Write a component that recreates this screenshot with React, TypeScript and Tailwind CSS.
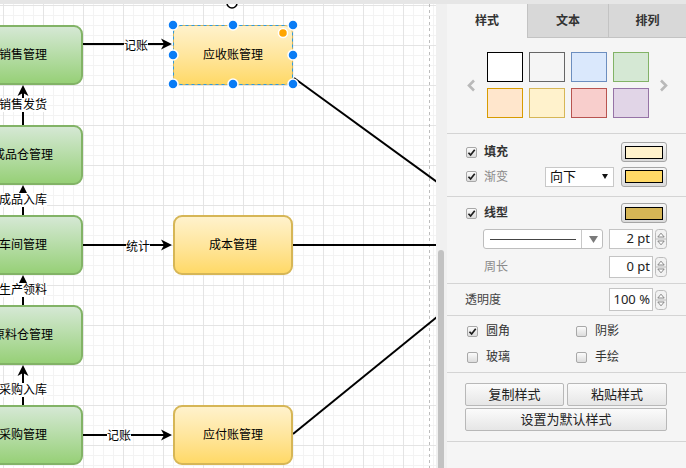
import React from 'react';

type Node = { label: string; pos: string };

const greenNodes: Node[] = [
  { label: '销售管理', pos: 'top-[21px]' },
  { label: '成品仓管理', pos: 'top-[121px]' },
  { label: '车间管理', pos: 'top-[211px]' },
  { label: '原料仓管理', pos: 'top-[301px]' },
  { label: '采购管理', pos: 'top-[401px]' },
];

const edgeLabels = [
  { text: '销售发货', pos: 'left-[23px] top-[101px]' },
  { text: '成品入库', pos: 'left-[23px] top-[196px]' },
  { text: '生产领料', pos: 'left-[23px] top-[286px]' },
  { text: '采购入库', pos: 'left-[23px] top-[386px]' },
  { text: '记账', pos: 'left-[136px] top-[42px]' },
  { text: '统计', pos: 'left-[138px] top-[243px]' },
  { text: '记账', pos: 'left-[119px] top-[432px]' },
];

const swatches = [
  'bg-white border-black',
  'bg-[#f5f5f5] border-[#666666]',
  'bg-[#dae8fc] border-[#6c8ebf]',
  'bg-[#d5e8d4] border-[#82b366]',
  'bg-[#ffe6cc] border-[#d79b00]',
  'bg-[#fff2cc] border-[#d6b656]',
  'bg-[#f8cecc] border-[#b85450]',
  'bg-[#e1d5e7] border-[#9673a6]',
];

function Grid() {
  const minorX: number[] = [];
  const majorX: number[] = [];
  const minorY: number[] = [];
  const majorY: number[] = [];
  for (let x = 3; x < 436; x += 10) ((x - 3) % 40 === 0 ? majorX : minorX).push(x);
  for (let y = 5; y < 468; y += 10) ((y - 5) % 40 === 0 ? majorY : minorY).push(y);
  return (
    <svg className="absolute inset-0" width={436} height={464} viewBox="0 4 436 464" shapeRendering="crispEdges">
      {minorX.map((x) => (
        <line key={'vx' + x} x1={x + 0.5} x2={x + 0.5} y1={4} y2={468} stroke="#f3f3f3" />
      ))}
      {minorY.map((y) => (
        <line key={'hy' + y} x1={0} x2={436} y1={y + 0.5} y2={y + 0.5} stroke="#f3f3f3" />
      ))}
      {majorX.map((x) => (
        <line key={'VX' + x} x1={x + 0.5} x2={x + 0.5} y1={4} y2={468} stroke="#e4e4e4" />
      ))}
      {majorY.map((y) => (
        <line key={'HY' + y} x1={0} x2={436} y1={y + 0.5} y2={y + 0.5} stroke="#e4e4e4" />
      ))}
      <line x1={429.5} x2={429.5} y1={4} y2={468} stroke="#bdbdbd" strokeDasharray="3 3" />
    </svg>
  );
}

const arrowRight = (tx: number, ty: number) =>
  `${tx},${ty} ${tx - 11},${ty - 5.5} ${tx - 8},${ty} ${tx - 11},${ty + 5.5}`;
const arrowUp = (tx: number, ty: number) =>
  `${tx},${ty} ${tx + 5.5},${ty + 11} ${tx},${ty + 8} ${tx - 5.5},${ty + 11}`;

function Edges() {
  return (
    <svg className="absolute inset-0" width={436} height={464} viewBox="0 4 436 464">
      <g stroke="#000" strokeWidth={2} fill="none">
        <line x1={23} y1={125} x2={23} y2={93} />
        <line x1={23} y1={215} x2={23} y2={193} />
        <line x1={23} y1={305} x2={23} y2={283} />
        <line x1={23} y1={405} x2={23} y2={373} />
        <line x1={83} y1={44} x2={164} y2={44} />
        <line x1={83} y1={245} x2={164} y2={245} />
        <line x1={83} y1={435} x2={164} y2={435} />
        <line x1={294} y1={78} x2={437} y2={182} />
        <line x1={293} y1={245} x2={437} y2={245} />
        <line x1={293} y1={434} x2={437} y2={317} />
      </g>
      <g fill="#000">
        <polygon points={arrowUp(23, 85)} />
        <polygon points={arrowUp(23, 185)} />
        <polygon points={arrowUp(23, 275)} />
        <polygon points={arrowUp(23, 365)} />
        <polygon points={arrowRight(172, 44)} />
        <polygon points={arrowRight(172, 245)} />
        <polygon points={arrowRight(172, 435)} />
      </g>
    </svg>
  );
}

function Handles() {
  const pts = [
    [173, 25], [233, 25], [293, 25],
    [173, 55], [293, 55],
    [173, 84], [233, 84], [293, 84],
  ];
  return (
    <svg className="pointer-events-none absolute inset-0" width={436} height={464} viewBox="0 4 436 464">
      <rect x={173.5} y={25.5} width={119} height={59} fill="none" stroke="#2f9be0" strokeDasharray="3 3" />
      <circle cx={232} cy={3} r={5} fill="#fff" stroke="#000" strokeWidth={1.5} />
      {pts.map(([x, y]) => (
        <circle key={`${x}-${y}`} cx={x} cy={y} r={5} fill="#0a7cf5" stroke="#fff" strokeWidth={1.5} />
      ))}
      <circle cx={283} cy={33} r={4.5} fill="#ffa500" stroke="#fff" strokeWidth={1.5} />
    </svg>
  );
}

function Canvas() {
  return (
    <div className="relative h-[464px] w-[436px] overflow-hidden bg-white text-[12px] text-black">
      <Grid />
      <Edges />
      {greenNodes.map((n) => (
        <div
          key={n.label}
          className={`absolute left-[-37px] ${n.pos} flex h-[60px] w-[120px] items-center justify-center rounded-[9px] border-2 border-[#82b366] bg-linear-to-b from-[#d5e8d4] to-[#97d077] whitespace-nowrap`}
        >
          {n.label}
        </div>
      ))}
      <div className="absolute left-[173px] top-[21px] flex h-[60px] w-[120px] items-center justify-center rounded-[8px] border border-[#d6b656] bg-linear-to-b from-[#fff2cc] to-[#ffd966]">
        应收账管理
      </div>
      <div className="absolute left-[173px] top-[211px] flex h-[60px] w-[120px] items-center justify-center rounded-[9px] border-2 border-[#d6b656] bg-linear-to-b from-[#fff2cc] to-[#ffd966]">
        成本管理
      </div>
      <div className="absolute left-[173px] top-[401px] flex h-[60px] w-[120px] items-center justify-center rounded-[9px] border-2 border-[#d6b656] bg-linear-to-b from-[#fff2cc] to-[#ffd966]">
        应付账管理
      </div>
      {edgeLabels.map((l) => (
        <span
          key={l.pos}
          className={`absolute ${l.pos} -translate-x-1/2 -translate-y-1/2 bg-white leading-[14px] whitespace-nowrap`}
        >
          {l.text}
        </span>
      ))}
      <Handles />
    </div>
  );
}

function Check({ checked }: { checked?: boolean }) {
  return (
    <span className="flex h-[11px] w-[11px] shrink-0 items-center justify-center rounded-[2px] border border-[#a8a8a8] bg-linear-to-b from-[#fbfbfb] to-[#dcdcdc]">
      {checked && (
        <svg viewBox="0 0 10 10" className="h-[9px] w-[9px]">
          <path d="M1.6 5.3 L4 7.7 L8.6 1.9" fill="none" stroke="#1e1e1e" strokeWidth={1.9} />
        </svg>
      )}
    </span>
  );
}

function ColorBtn({ fill }: { fill: string }) {
  return (
    <div className="flex h-[20px] w-[46px] shrink-0 items-center justify-center rounded-[3px] border border-[#a5a5a5] bg-linear-to-b from-[#f6f6f6] to-[#dadada]">
      <div className={`h-[13px] w-[38px] border border-black ${fill}`} />
    </div>
  );
}

function Spinner() {
  return (
    <svg width={12} height={20} viewBox="0 0 12 20" className="shrink-0">
      <rect x={0.5} y={0.5} width={11} height={19} rx={3} fill="#f2f2f2" stroke="#bcbcbc" />
      <line x1={1} x2={11} y1={10} y2={10} stroke="#bcbcbc" />
      <path d="M2.8 8 L6 4.2 L9.2 8 Z" fill="#fff" stroke="#7a7a7a" strokeWidth={0.9} />
      <path d="M2.8 12 L6 15.8 L9.2 12 Z" fill="#fff" stroke="#7a7a7a" strokeWidth={0.9} />
    </svg>
  );
}

function NumInput({ value, h }: { value: string; h: string }) {
  return (
    <div className="flex items-center gap-[2px]">
      <div className={`flex ${h} w-[44px] items-center justify-end border border-[#c4c4c4] bg-white pr-[2px] text-[13px] text-[#222]`}>
        {value}
      </div>
      <Spinner />
    </div>
  );
}

function Panel() {
  return (
    <div className="flex h-[464px] w-[239px] flex-col bg-[#f5f5f5] text-[12px] text-[#333]">
      <div className="flex h-[34px] font-bold">
        <div className="flex w-[80px] items-center justify-center">样式</div>
        <div className="flex w-[81px] items-center justify-center border-b border-l border-[#c3c3c3] bg-[#d8d8d8]">文本</div>
        <div className="flex flex-1 items-center justify-center border-b border-l border-[#c3c3c3] bg-[#d8d8d8]">排列</div>
      </div>

      <div className="flex h-[95px] items-center pb-[2px] pl-[20px]">
        <svg width={9} height={13} viewBox="0 0 9 13" className="mt-[1px]">
          <path d="M7 1.5 L2 6.5 L7 11.5" fill="none" stroke="#b9b9b9" strokeWidth={2.6} />
        </svg>
        <div className="ml-[11px] grid grid-cols-[repeat(4,36px)] grid-rows-[repeat(2,30px)] gap-[6px]">
          {swatches.map((s) => (
            <div key={s} className={`border-[1.5px] ${s}`} />
          ))}
        </div>
        <svg width={9} height={13} viewBox="0 0 9 13" className="ml-[10px] mt-[1px]">
          <path d="M2 1.5 L7 6.5 L2 11.5" fill="none" stroke="#b9b9b9" strokeWidth={2.6} />
        </svg>
      </div>

      <div className="flex h-[63px] flex-col gap-[4px] border-t border-[#d4d4d4] pl-[19px] pr-[19px] pt-[8px]">
        <div className="flex h-[20px] items-center">
          <Check checked />
          <span className="ml-[7px] font-semibold">填充</span>
          <div className="flex-1" />
          <ColorBtn fill="bg-[#fff2cc]" />
        </div>
        <div className="flex h-[21px] items-center">
          <Check checked />
          <span className="ml-[7px] text-[#8a8a8a]">渐变</span>
          <div className="flex-1" />
          <div className="flex h-[20px] w-[69px] items-center justify-between border border-[#c8c8c8] bg-white pl-[4px] pr-[5px] text-[13px] text-[#111]">
            <span>向下</span>
            <svg width={6} height={5} viewBox="0 0 6 5">
              <path d="M0 0 H6 L3 5 Z" fill="#111" />
            </svg>
          </div>
          <div className="ml-[7px]">
            <ColorBtn fill="bg-[#ffd966]" />
          </div>
        </div>
      </div>

      <div className="flex h-[87px] flex-col border-t border-[#d4d4d4] pl-[19px] pr-[19px] pt-[6px]">
        <div className="flex h-[20px] items-center">
          <Check checked />
          <span className="ml-[7px] font-semibold">线型</span>
          <div className="flex-1" />
          <ColorBtn fill="bg-[#d6b656]" />
        </div>
        <div className="mt-[6px] flex h-[20px] items-center">
          <div className="ml-[17px] flex h-[20px] w-[120px] items-center rounded-[3px] border border-[#bdbdbd] bg-white">
            <div className="ml-[6px] h-px w-[86px] bg-[#444]" />
            <div className="ml-[5px] h-full w-px bg-[#c8c8c8]" />
            <svg width={9} height={7} viewBox="0 0 9 7" className="ml-[7px]">
              <path d="M0 0 H9 L4.5 7 Z" fill="#7a7a7a" />
            </svg>
          </div>
          <div className="flex-1" />
          <NumInput value="2 pt" h="h-[20px]" />
        </div>
        <div className="mt-[7px] flex h-[22px] items-center">
          <span className="ml-[18px] text-[#8a8a8a]">周长</span>
          <div className="flex-1" />
          <NumInput value="0 pt" h="h-[22px]" />
        </div>
      </div>

      <div className="flex h-[32px] items-center border-t border-[#d4d4d4] pl-[18px] pr-[19px]">
        <span className="text-[#444]">透明度</span>
        <div className="flex-1" />
        <NumInput value="100 %" h="h-[23px]" />
      </div>

      <div className="flex h-[57px] flex-col justify-center gap-[10px] border-t border-[#d4d4d4] pl-[20px]">
        <div className="flex h-[16px] items-center">
          <div className="flex w-[109px] items-center">
            <Check checked />
            <span className="ml-[8px]">圆角</span>
          </div>
          <Check />
          <span className="ml-[8px]">阴影</span>
        </div>
        <div className="flex h-[16px] items-center">
          <div className="flex w-[109px] items-center">
            <Check />
            <span className="ml-[8px]">玻璃</span>
          </div>
          <Check />
          <span className="ml-[8px]">手绘</span>
        </div>
      </div>

      <div className="flex h-[70px] flex-col gap-[2px] border-t border-b border-[#d4d4d4] pl-[18px] pt-[10px] text-[13px] text-[#222]">
        <div className="flex gap-[3px]">
          <button className="flex h-[23px] w-[99px] items-center justify-center rounded-[2px] border border-[#b8b8b8] bg-linear-to-b from-[#fbfbfb] to-[#e6e6e6]">
            复制样式
          </button>
          <button className="flex h-[23px] w-[100px] items-center justify-center rounded-[2px] border border-[#b8b8b8] bg-linear-to-b from-[#fbfbfb] to-[#e6e6e6]">
            粘贴样式
          </button>
        </div>
        <button className="flex h-[23px] w-[202px] items-center justify-center rounded-[2px] border border-[#b8b8b8] bg-linear-to-b from-[#fbfbfb] to-[#e6e6e6]">
          设置为默认样式
        </button>
      </div>
    </div>
  );
}

export default function App() {
  return (
    <div className="flex h-[468px] w-[686px] flex-col overflow-hidden bg-[#f5f5f5] font-['Noto_Sans','Noto_Sans_CJK_SC',sans-serif]">
      <div className="h-[4px] bg-[#e6e6e6]" />
      <div className="flex">
        <Canvas />
        <div className="flex w-[11px] flex-col bg-[#f0f0f0]">
          <div className="h-[246px]" />
          <div className="ml-[2px] w-[6px] flex-1 rounded-t-full bg-[#c2c2c2]" />
        </div>
        <Panel />
      </div>
    </div>
  );
}
